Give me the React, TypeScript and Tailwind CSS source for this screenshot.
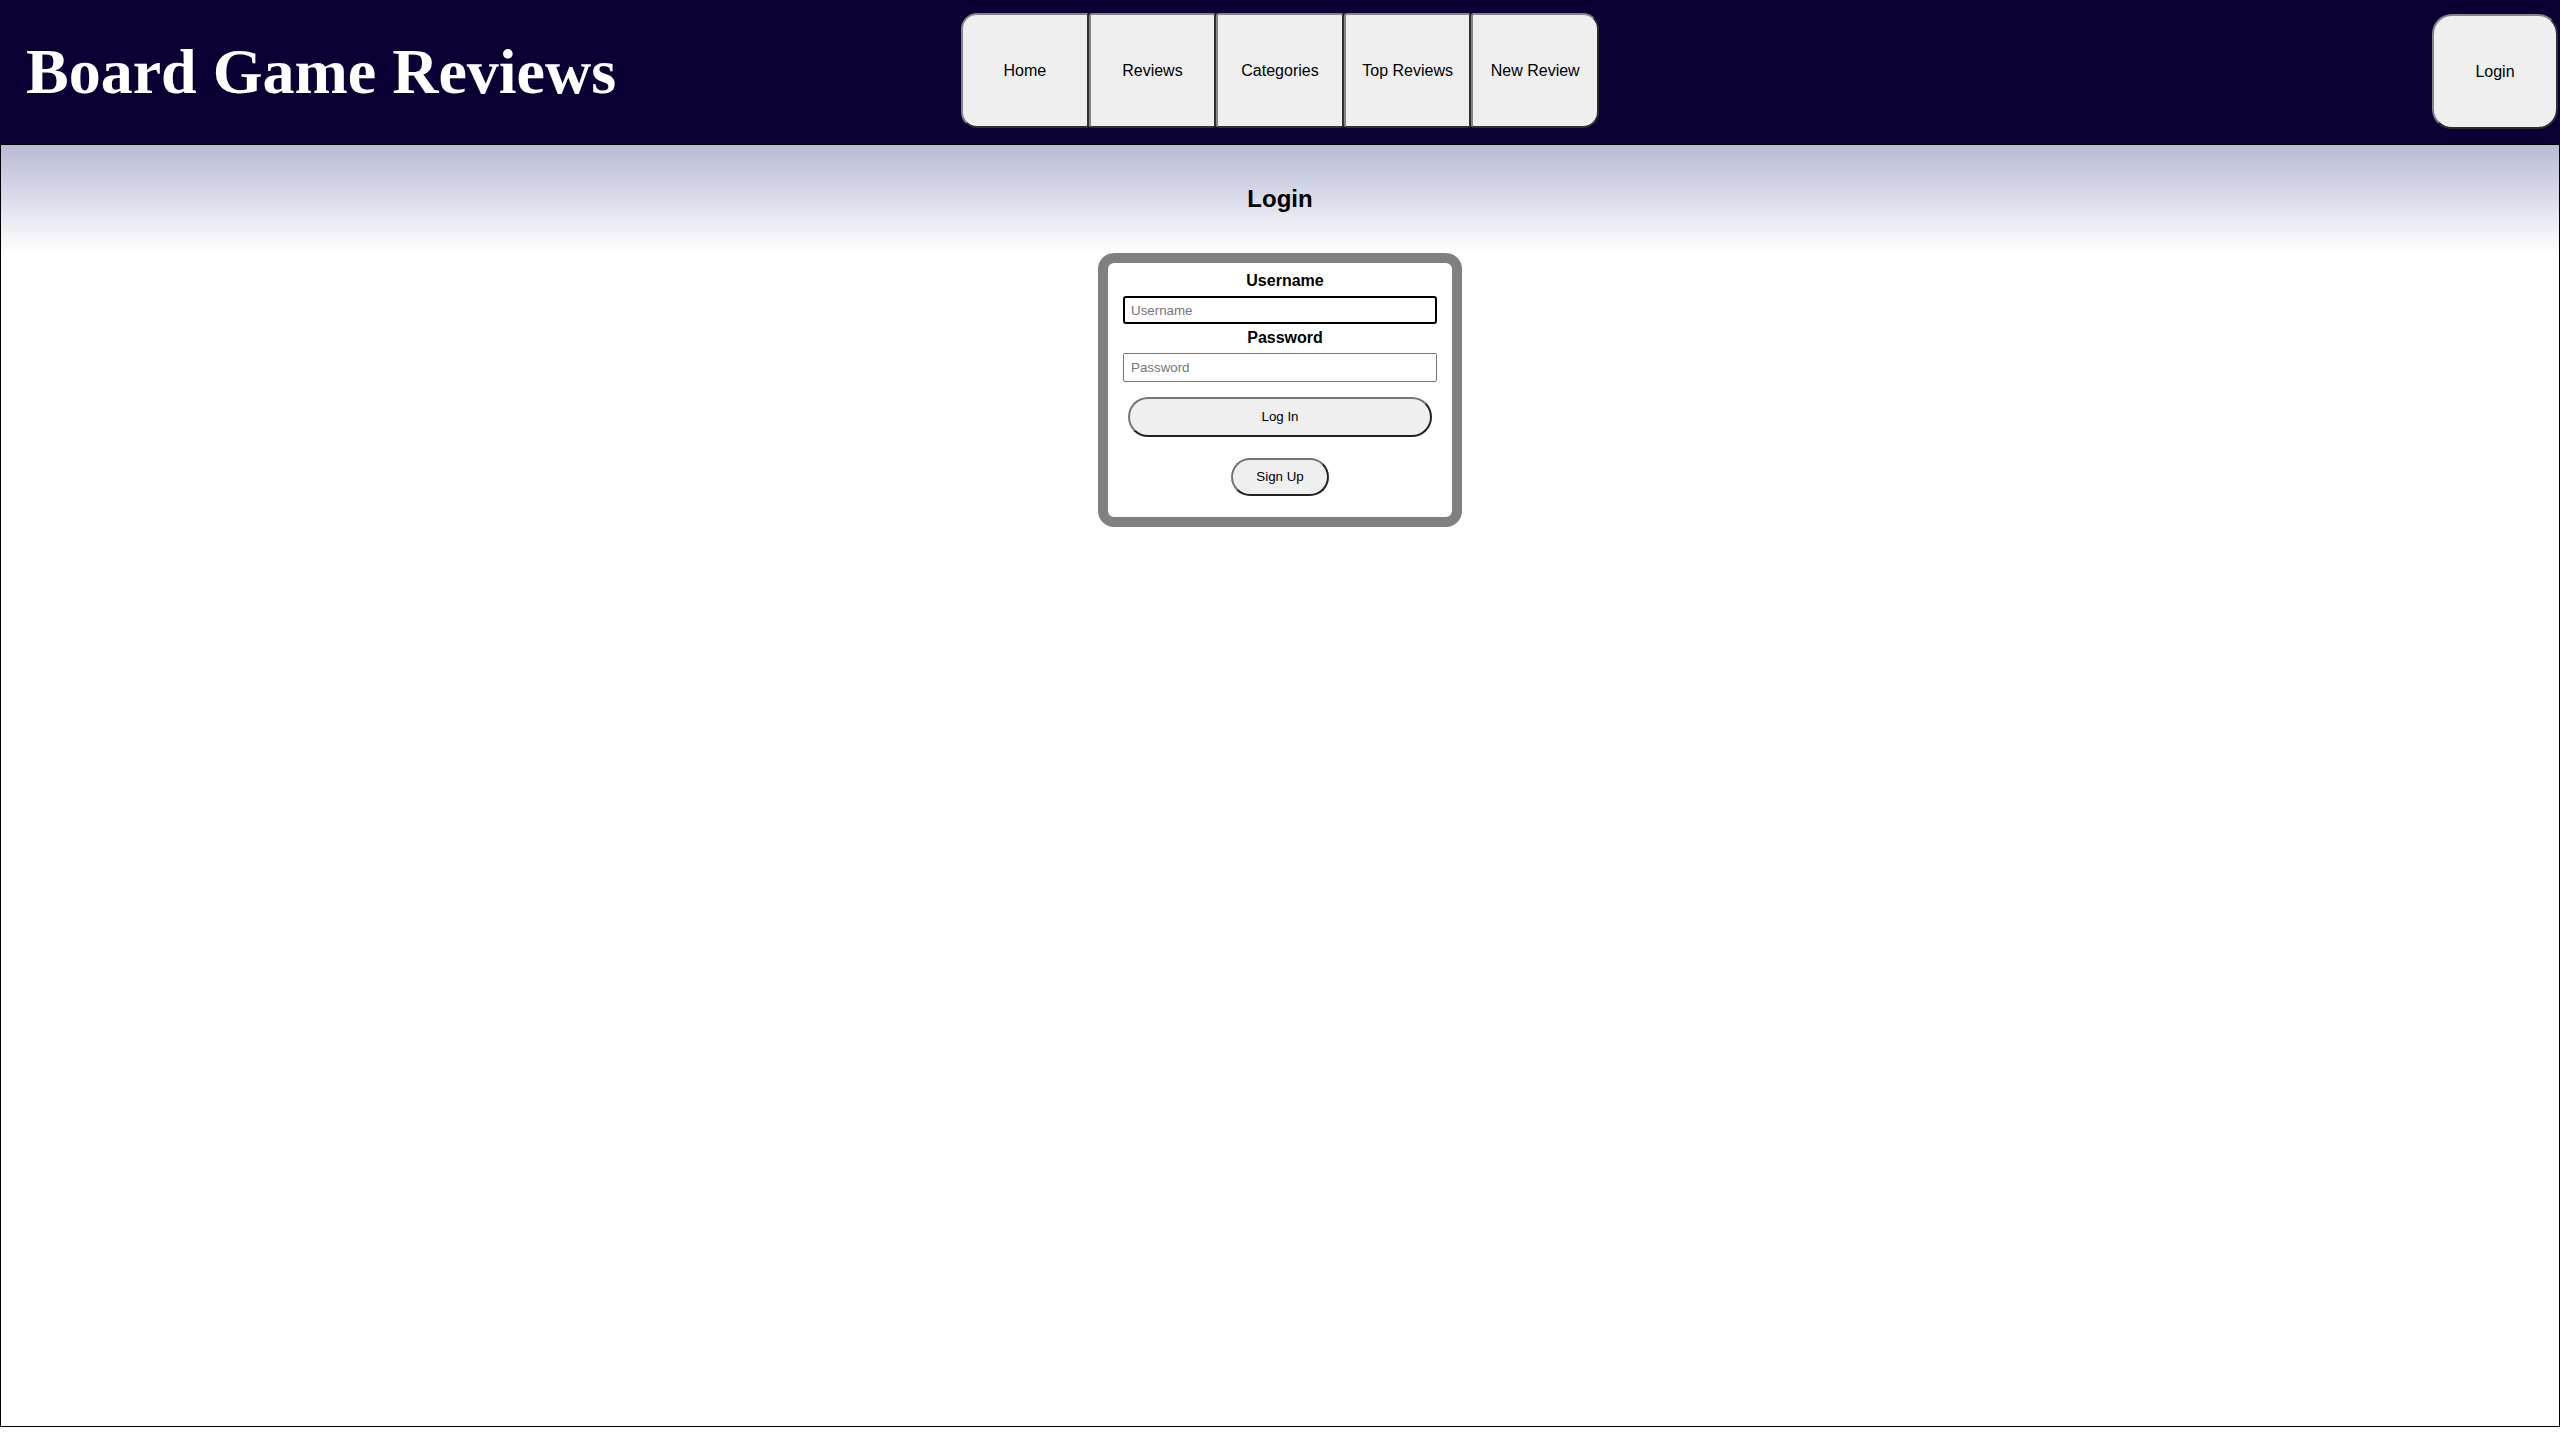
import React from "react";

const navItems = ["Home", "Reviews", "Categories", "Top Reviews", "New Review"];

export default function App() {
  return (
    <div className="w-full h-[1440px] bg-white font-['Liberation_Sans',Arial,sans-serif] text-black">
      <header className="h-[144px] bg-[#0a0033] grid grid-cols-[1fr_auto_1fr]">
        <div className="flex items-center pl-[26px]">
          <h1 className="font-['Liberation_Serif','Times_New_Roman',serif] font-bold text-[64px] leading-none text-white pb-[1px]">
            Board Game Reviews
          </h1>
        </div>
        <nav className="flex pt-[13px] items-start">
          {navItems.map((label, i) => (
            <button
              key={label}
              className={
                "w-[127.6px] h-[115px] bg-[#efefef] text-[16px] text-black border-2 border-t-[#858585] border-l-[#858585] border-b-[#2e2e2e] border-r-[#2e2e2e] " +
                (i === 0
                  ? "rounded-l-[16px] rounded-r-[3px]"
                  : i === navItems.length - 1
                  ? "rounded-r-[16px] rounded-l-[3px]"
                  : "rounded-[3px]")
              }
            >
              {label}
            </button>
          ))}
        </nav>
        <div className="flex justify-end items-start pt-[14px] pr-[2px]">
          <button className="w-[126px] h-[115px] bg-[#efefef] text-[16px] text-black rounded-[20px] border-2 border-t-[#858585] border-l-[#858585] border-b-[#2e2e2e] border-r-[#2e2e2e]">
            Login
          </button>
        </div>
      </header>
      <main className="h-[1283px] border border-black">
        <div className="h-[108px] bg-gradient-to-b from-[#b8bad5] to-white flex items-center justify-center">
          <h2 className="text-[24px] font-bold leading-[28px]">Login</h2>
        </div>
        <div className="mx-auto w-[364px] border-[10px] border-[#808080] rounded-[16px] bg-white flex flex-col items-center pt-[9px] pb-[21px]">
          <label className="text-[16px] font-bold leading-[18px] pl-[10px]">Username</label>
          <input
            placeholder="Username"
            className="mt-[6px] w-[314px] h-[28px] border-2 border-black rounded-[3px] px-[6px] text-[13.33px] placeholder:text-[#757575] outline-none"
          />
          <label className="mt-[5px] text-[16px] font-bold leading-[18px] pl-[10px]">Password</label>
          <input
            type="password"
            placeholder="Password"
            className="mt-[6px] w-[314px] h-[29px] border border-[#767676] rounded-[2px] px-[7px] text-[13.33px] placeholder:text-[#757575] outline-none"
          />
          <button className="mt-[15px] w-[304px] h-[40px] rounded-full bg-[#efefef] text-[13.33px] border-2 border-t-[#767676] border-l-[#767676] border-b-[#222] border-r-[#222]">
            Log In
          </button>
          <button className="mt-[21px] w-[98px] h-[38px] rounded-full bg-[#efefef] text-[13.33px] border-2 border-t-[#767676] border-l-[#767676] border-b-[#222] border-r-[#222]">
            Sign Up
          </button>
        </div>
      </main>
    </div>
  );
}
